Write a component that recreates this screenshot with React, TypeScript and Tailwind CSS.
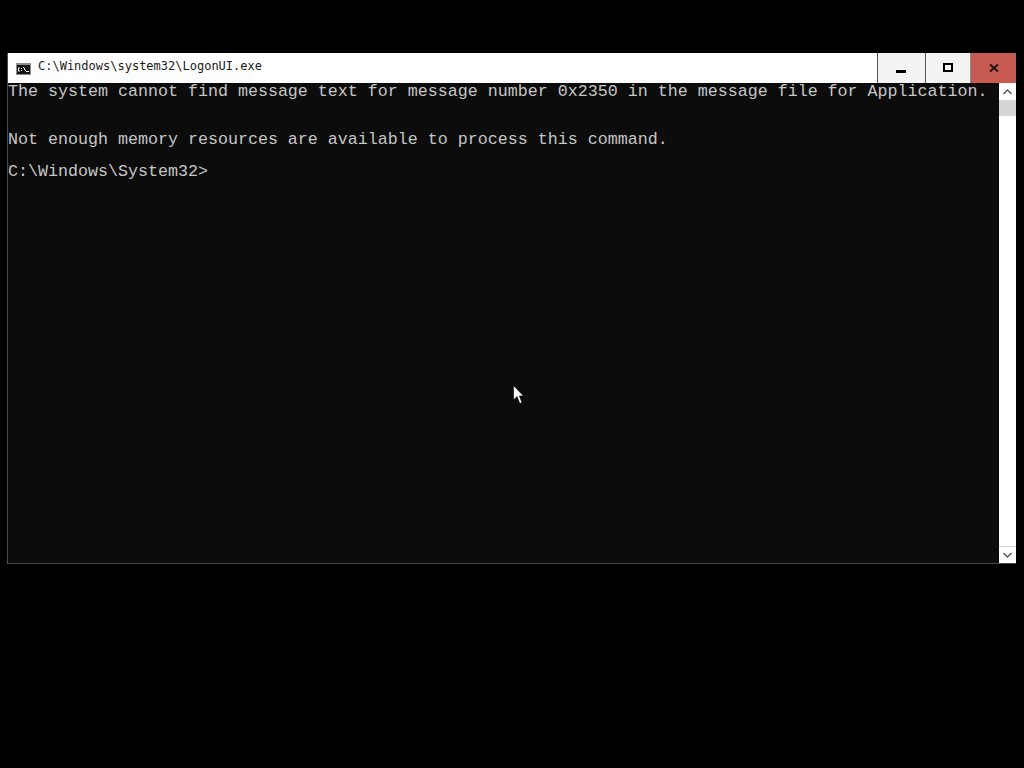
export default function App() {
  return (
    <div className="relative w-[1024px] h-[768px] bg-black overflow-hidden pt-[53px] pl-[7px]">
      <div className="w-[1009px] h-[511px] flex flex-col border-l border-b border-[#4a4a4a]">
        <div className="h-[30px] flex bg-white shrink-0">
          <div className="flex-1 flex items-center pl-[8px] gap-[7px] min-w-0">
            <svg width="15" height="12" viewBox="0 0 15 12" className="shrink-0 mt-[1px]">
              <rect x="0" y="0" width="15" height="12" fill="#8f8f8f" />
              <rect x="1" y="2" width="13" height="9" fill="#111111" />
              <path d="M2 4.5h2v1H3v2h1v1H2zM5 5h1v1H5zM5 7h1v1H5zM7 4h1v1H7zM8 5h1v2H8zM9 7h1v1H9zM10 8h3v1h-3z" fill="#f0f0f0" />
            </svg>
            <span className="font-['DejaVu_Sans_Mono',monospace] text-[12px] text-[#1a1a1a] whitespace-nowrap mt-[-4px]">C:\Windows\system32\LogonUI.exe</span>
          </div>
          <div className="w-[48px] flex items-center justify-center border-l border-[#555555] bg-[#f3f3f3]">
            <div className="w-[10px] h-[3px] bg-black mt-[7px] mr-[2px]" />
          </div>
          <div className="w-[45px] flex items-center justify-center border-l border-[#555555] bg-[#f3f3f3]">
            <div className="w-[10px] h-[9px] border-2 border-black mt-[-1px]" />
          </div>
          <div className="w-[46px] flex items-center justify-center bg-[#c75b52] border-l border-[#8a8a8a]">
            <svg width="10" height="10" viewBox="0 0 10 10" className="mt-[-1px]">
              <path d="M1 1.5L9 8.5M9 1.5L1 8.5" stroke="#2a1512" strokeWidth="2.2" />
            </svg>
          </div>
        </div>
        <div className="flex-1 flex min-h-0">
          <div className="flex-1 bg-[#0c0c0c] text-[#c6c6c6] font-['Liberation_Mono',monospace] text-[16.67px] leading-[16px] whitespace-pre pt-px">
            <div>The system cannot find message text for message number 0x2350 in the message file for Application.</div>
            <div>{"\u00a0"}</div>
            <div>{"\u00a0"}</div>
            <div>Not enough memory resources are available to process this command.</div>
            <div>{"\u00a0"}</div>
            <div>{"C:\\Windows\\System32>"}</div>
          </div>
          <div className="w-[17px] bg-white flex flex-col justify-between shrink-0">
            <div>
              <div className="h-[17px] flex items-center justify-center">
                <svg width="9" height="6" viewBox="0 0 9 6"><path d="M0.5 5L4.5 1L8.5 5" stroke="#555" strokeWidth="1.4" fill="none" /></svg>
              </div>
              <div className="h-[16px] bg-[#d6d6d6]" />
            </div>
            <div className="h-[17px] flex items-center justify-center border-t border-[#cfcfcf]">
              <svg width="9" height="6" viewBox="0 0 9 6"><path d="M0.5 1L4.5 5L8.5 1" stroke="#555" strokeWidth="1.4" fill="none" /></svg>
            </div>
          </div>
        </div>
      </div>
      <svg className="absolute left-[513px] top-[385px]" width="11" height="20" viewBox="0 0 11 20">
        <path d="M0.5 0.5V15L4 11.5L6.8 18.5L9 17.5L6.4 11H10.5Z" fill="#fff" stroke="#000" strokeWidth="0.6" />
      </svg>
    </div>
  );
}
